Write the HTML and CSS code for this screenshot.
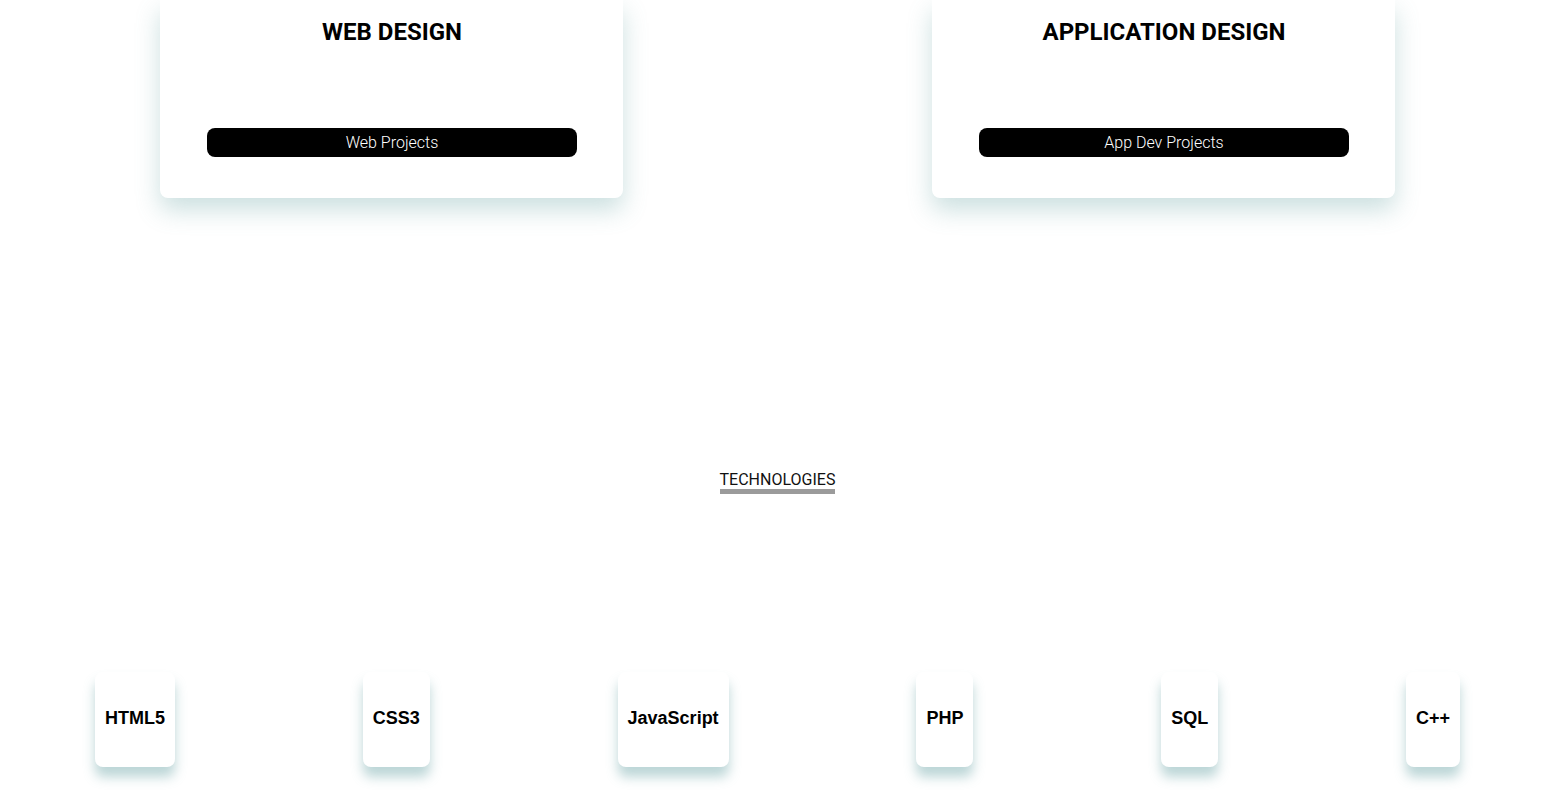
FILE: index.html
```html
<!DOCTYPE html>
<html lang="en">
<head>
<meta charset="utf-8">
<title>Services</title>
<link rel="stylesheet" href="styles.css">
</head>
<body>
<main class="page">
  <section class="services">
    <div class="service-card">
      <h2 class="service-title">WEB DESIGN</h2>
      <a class="service-btn" href="#">Web Projects</a>
    </div>
    <div class="service-card">
      <h2 class="service-title">APPLICATION DESIGN</h2>
      <a class="service-btn" href="#">App Dev Projects</a>
    </div>
  </section>
  <section class="tech">
    <div class="tech-head"><h3 class="tech-title">TECHNOLOGIES</h3></div>
    <div class="tech-row">
      <div class="tech-card">HTML5</div>
      <div class="tech-card">CSS3</div>
      <div class="tech-card">JavaScript</div>
      <div class="tech-card">PHP</div>
      <div class="tech-card">SQL</div>
      <div class="tech-card">C++</div>
    </div>
  </section>
</main>
</body>
</html>
```
FILE: styles.css
```css
html, body {
  margin: 0;
  padding: 0;
  background: #fff;
}
body {
  font-family: Roboto, "Liberation Sans", Arial, sans-serif;
  color: #000;
  overflow: hidden;
}
.page {
  padding-left: 10px;
  padding-bottom: 40px;
}
.services {
  display: flex;
  justify-content: space-between;
  padding: 0 150px;
}
.service-card {
  width: 463px;
  box-sizing: border-box;
  background: #fff;
  border-radius: 0 0 8px 8px;
  box-shadow: 0 12px 24px rgba(95, 158, 160, 0.32);
  padding: 18px 46px 41px 47px;
  display: flex;
  flex-direction: column;
  align-items: center;
}
.service-title {
  margin: 0;
  font-size: 24px;
  font-weight: 700;
  line-height: 28px;
  color: #000;
}
.service-btn {
  margin-top: 82px;
  width: 100%;
  height: 29px;
  border-radius: 8px;
  background: #000;
  color: #fff;
  text-decoration: none;
  font-size: 16px;
  font-weight: 300;
  display: flex;
  align-items: center;
  justify-content: center;
}
.tech {
  padding-top: 272px;
}
.tech-head {
  display: flex;
  justify-content: center;
}
.tech-title {
  margin: 0;
  font-size: 16px;
  font-weight: 400;
  line-height: 19px;
  color: #111;
  border-bottom: 5px solid #9b9b9b;
}
.tech-row {
  display: flex;
  justify-content: space-between;
  align-items: flex-start;
  padding: 178px 85px 0 85px;
}
.tech-card {
  height: 95px;
  box-sizing: border-box;
  padding: 0 10px 2px;
  background: #fff;
  border-radius: 8px;
  box-shadow: 0 10px 12px rgba(95, 158, 160, 0.42);
  display: flex;
  align-items: center;
  justify-content: center;
  font-family: "Liberation Sans", Arial, sans-serif;
  font-size: 18px;
  font-weight: 700;
  color: #000;
}
```
